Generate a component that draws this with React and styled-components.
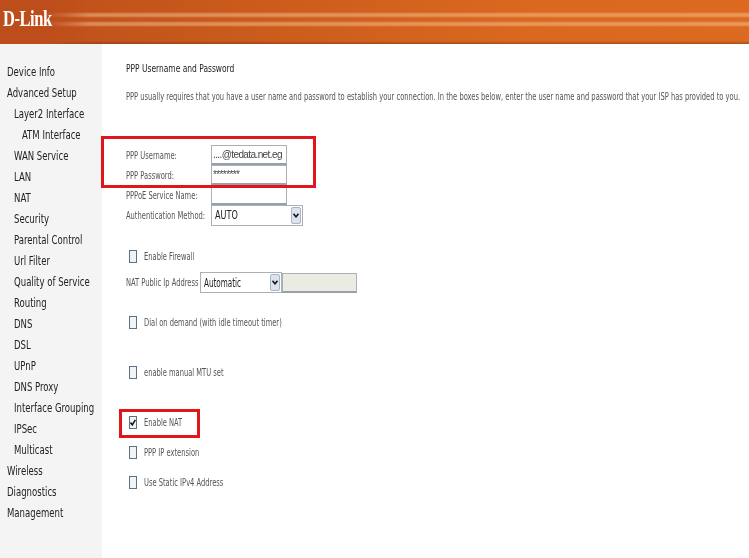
import styled, { createGlobalStyle } from "styled-components";

const GlobalStyle = createGlobalStyle`
  html, body {
    margin: 0;
    padding: 0;
    background: #fff;
    overflow: hidden;
  }
`;

const Page = styled.div`
  position: relative;
  width: 749px;
  height: 558px;
  overflow: hidden;
  font-family: "DejaVu Sans Condensed", "Liberation Sans", sans-serif;
  display: flex;
  flex-direction: column;
`;

// the screenshot was squeezed horizontally, so all its text is narrow
const Narrow = styled.span`
  display: inline-block;
  white-space: nowrap;
  transform-origin: left center;
  transform: scaleX(${(props) => props.scale || 0.68});
`;

const Header = styled.header`
  height: 44px;
  flex: none;
  padding: 5px 0 0 3px;
  box-sizing: border-box;
  background:
    linear-gradient(to right, #bd4e1b 0 45px, rgba(189, 78, 27, 0) 90px),
    linear-gradient(to bottom,
      transparent 0 12px,
      rgba(255, 205, 160, 0.45) 14px 16px,
      transparent 18px 21px,
      rgba(255, 205, 160, 0.45) 23px 25px,
      transparent 27px 41px,
      rgba(110, 50, 20, 0.5) 44px),
    linear-gradient(to right, #bd4e1b 0, #c95a1c 30%, #da681f 70%, #dc6a20 100%);
`;

const Logo = styled.div`
  font-family: "Liberation Serif", serif;
  font-weight: bold;
  font-size: 24px;
  line-height: 26px;
  letter-spacing: -0.7px;
  color: #fff;
  filter: blur(0.3px);
`;

const Body = styled.div`
  flex: 1;
  display: flex;
  filter: blur(0.3px);
`;

const Sidebar = styled.nav`
  width: 102px;
  flex: none;
  background: #f4f4f4;
  padding-top: 17px;
  box-sizing: border-box;
`;

const MenuItem = styled.div`
  height: 21px;
  line-height: 21px;
  font-size: 13px;
  color: #222;
  padding-left: ${(props) => 6.5 + props.level * 7.5}px;
`;

const Main = styled.main`
  flex: 1;
  padding: 18px 0 0 24px;
`;

const Title = styled.div`
  font-size: 11px;
  line-height: 14px;
  color: #222;
`;

const Intro = styled.p`
  margin: 14px 0 0;
  font-size: 11px;
  line-height: 14px;
  color: #555;
`;

const Form = styled.div`
  margin-top: 41px;
  display: flex;
  flex-direction: column;
`;

const FieldRow = styled.div`
  display: flex;
  align-items: center;
  height: 20px;
`;

const Label = styled.label`
  width: ${(props) => props.width || 85}px;
  flex: none;
  font-size: 11px;
  color: #555;
`;

const TextBox = styled.input`
  box-sizing: border-box;
  width: ${(props) => props.width || 76}px;
  height: 20px;
  border: 1px solid #a8b0b8;
  border-bottom: 2px solid #9aa0a8;
  padding: 0 1px;
  margin: 0;
  font: 10px "Liberation Sans", sans-serif;
  letter-spacing: -0.6px;
  color: #444;
  outline: none;
  background: ${(props) => (props.disabled ? "#ecebe3" : "#fff")};
`;

const Select = styled.div`
  box-sizing: border-box;
  width: ${(props) => props.width}px;
  height: 21px;
  border: 1px solid #a8b0b8;
  display: flex;
  align-items: center;
  justify-content: space-between;
  padding: 0 1px 0 3px;
  font-size: 12px;
  color: #222;
  background: #fff;
`;

const SelectArrow = styled.span`
  width: 10px;
  height: 17px;
  background: #dde3ee;
  border: 1px solid #a8b4c8;
  border-radius: 2px;
  display: flex;
  align-items: center;
  justify-content: center;
  box-sizing: border-box;
`;

const CheckRow = styled.div`
  display: flex;
  align-items: center;
  height: 14px;
  gap: 7px;
  padding-left: 3px;
  margin-top: ${(props) => props.gap}px;
`;

const CheckBox = styled.span`
  width: 6px;
  height: 11px;
  flex: none;
  border: 1px solid #5a7088;
  background: #f2f4f4;
  display: flex;
  align-items: center;
  justify-content: center;
`;

const CheckText = styled.span`
  font-size: 11px;
  color: #555;
`;

const NatRow = styled.div`
  display: flex;
  align-items: center;
  height: 21px;
  margin-top: 9px;
`;

const Highlight = styled.div`
  position: absolute;
  left: ${(props) => props.x}px;
  top: ${(props) => props.y}px;
  width: ${(props) => props.w}px;
  height: ${(props) => props.h}px;
  border: 3px solid #e2141c;
  box-sizing: border-box;
  pointer-events: none;
`;

const menu = [
  ["Device Info", 0],
  ["Advanced Setup", 0],
  ["Layer2 Interface", 1],
  ["ATM Interface", 2],
  ["WAN Service", 1],
  ["LAN", 1],
  ["NAT", 1],
  ["Security", 1],
  ["Parental Control", 1],
  ["Url Filter", 1],
  ["Quality of Service", 1],
  ["Routing", 1],
  ["DNS", 1],
  ["DSL", 1],
  ["UPnP", 1],
  ["DNS Proxy", 1],
  ["Interface Grouping", 1],
  ["IPSec", 1],
  ["Multicast", 1],
  ["Wireless", 0],
  ["Diagnostics", 0],
  ["Management", 0],
];

const Arrow = () => (
  <SelectArrow>
    <svg width="6" height="5" viewBox="0 0 6 5">
      <path d="M0.5 0.8 L3 3.8 L5.5 0.8" fill="none" stroke="#1a1a1a" strokeWidth="1.6" />
    </svg>
  </SelectArrow>
);

const Check = ({ label, gap, checked }) => (
  <CheckRow gap={gap}>
    <CheckBox>
      {checked && (
        <svg width="6" height="7" viewBox="0 0 6 7">
          <path d="M0.5 3.5 L2.3 5.8 L5.4 0.8" fill="none" stroke="#111" strokeWidth="1.6" />
        </svg>
      )}
    </CheckBox>
    <CheckText>
      <Narrow>{label}</Narrow>
    </CheckText>
  </CheckRow>
);

const App = () => {
  return (
    <Page>
      <GlobalStyle />
      <Header>
        <Logo>
          <Narrow scale={0.69}>D-Link</Narrow>
        </Logo>
      </Header>
      <Body>
        <Sidebar>
          {menu.map(([name, level]) => (
            <MenuItem key={name} level={level}>
              <Narrow scale={0.73}>{name}</Narrow>
            </MenuItem>
          ))}
        </Sidebar>
        <Main>
          <Title>
            <Narrow scale={0.76}>PPP Username and Password</Narrow>
          </Title>
          <Intro>
            <Narrow>
              PPP usually requires that you have a user name and password to establish your connection. In the boxes below, enter the user name and password that your ISP has provided to you.
            </Narrow>
          </Intro>
          <Form>
            <FieldRow>
              <Label>
                <Narrow>PPP Username:</Narrow>
              </Label>
              <TextBox defaultValue="....@tedata.net.eg" />
            </FieldRow>
            <FieldRow>
              <Label>
                <Narrow>PPP Password:</Narrow>
              </Label>
              <TextBox defaultValue="********" />
            </FieldRow>
            <FieldRow>
              <Label>
                <Narrow>PPPoE Service Name:</Narrow>
              </Label>
              <TextBox />
            </FieldRow>
            <FieldRow>
              <Label>
                <Narrow>Authentication Method:</Narrow>
              </Label>
              <Select width={92}>
                <Narrow scale={0.75}>AUTO</Narrow>
                <Arrow />
              </Select>
            </FieldRow>
            <Check label="Enable Firewall" gap={24} />
            <NatRow>
              <Label width={74}>
                <Narrow>NAT Public Ip Address</Narrow>
              </Label>
              <Select width={82}>
                <Narrow scale={0.67}>Automatic</Narrow>
                <Arrow />
              </Select>
              <TextBox disabled width={75} />
            </NatRow>
            <Check label="Dial on demand (with idle timeout timer)" gap={22} />
            <Check label="enable manual MTU set" gap={36} />
            <Check label="Enable NAT" gap={36} checked />
            <Check label="PPP IP extension" gap={16} />
            <Check label="Use Static IPv4 Address" gap={16} />
          </Form>
        </Main>
      </Body>
      <Highlight x={101} y={136} w={215} h={52} />
      <Highlight x={119} y={409} w={81} h={29} />
    </Page>
  );
};

export default App;
